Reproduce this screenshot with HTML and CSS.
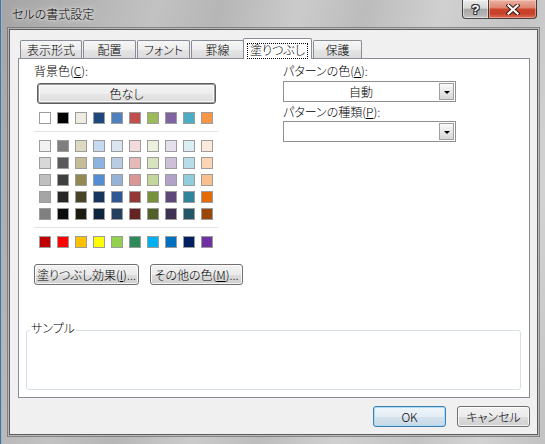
FILE: index.html
```html
<!DOCTYPE html>
<html lang="ja">
<head>
<meta charset="utf-8">
<title>セルの書式設定</title>
<link rel="stylesheet" href="styles.css">
</head>
<body>
<div class="window">
  <div class="titlebar">
    <div class="title">セルの書式設定</div>
    <div class="caption-buttons">
      <div class="cap-btn help"><span class="help-glyph">?</span></div>
      <div class="cap-btn close">
        <svg width="14" height="11" viewBox="0 0 14 11">
          <path d="M2.5 1.5 L11.5 9.5 M11.5 1.5 L2.5 9.5" stroke="#3a1a14" stroke-width="4.2" stroke-linecap="square" fill="none"/>
          <path d="M2.5 1.5 L11.5 9.5 M11.5 1.5 L2.5 9.5" stroke="#ffffff" stroke-width="2.2" stroke-linecap="square" fill="none"/>
        </svg>
      </div>
    </div>
  </div>
  <div class="client">
    <div class="tabs">
      <div class="tab w62">表示形式</div>
      <div class="tab w53">配置</div>
      <div class="tab w53">フォント</div>
      <div class="tab w53">罫線</div>
      <div class="tab sel"><span class="focus">塗りつぶし</span></div>
      <div class="tab w49">保護</div>
    </div>
    <div class="page">
      <div class="top">
        <div class="left">
          <div class="label">背景色(<u>C</u>):</div>
          <div class="nocolor">色なし</div>
          <div class="swatches first">
            <span class="sw" style="background:#ffffff"></span>
            <span class="sw" style="background:#000000"></span>
            <span class="sw" style="background:#eeece1"></span>
            <span class="sw" style="background:#1f497d"></span>
            <span class="sw" style="background:#4f81bd"></span>
            <span class="sw" style="background:#c0504d"></span>
            <span class="sw" style="background:#9bbb59"></span>
            <span class="sw" style="background:#8064a2"></span>
            <span class="sw" style="background:#4bacc6"></span>
            <span class="sw" style="background:#f79646"></span>
          </div>
          <div class="sep"></div>
          <div class="tints">
            <div class="swatches">
              <span class="sw" style="background:#f2f2f2"></span>
              <span class="sw" style="background:#7f7f7f"></span>
              <span class="sw" style="background:#ddd9c3"></span>
              <span class="sw" style="background:#c6d9f0"></span>
              <span class="sw" style="background:#dbe5f1"></span>
              <span class="sw" style="background:#f2dcdb"></span>
              <span class="sw" style="background:#ebf1dd"></span>
              <span class="sw" style="background:#e5e0ec"></span>
              <span class="sw" style="background:#dbeef3"></span>
              <span class="sw" style="background:#fdeada"></span>
            </div>
            <div class="swatches">
              <span class="sw" style="background:#d8d8d8"></span>
              <span class="sw" style="background:#595959"></span>
              <span class="sw" style="background:#c4bd97"></span>
              <span class="sw" style="background:#8db3e2"></span>
              <span class="sw" style="background:#b8cce4"></span>
              <span class="sw" style="background:#e5b9b7"></span>
              <span class="sw" style="background:#d7e3bc"></span>
              <span class="sw" style="background:#ccc1d9"></span>
              <span class="sw" style="background:#b7dde8"></span>
              <span class="sw" style="background:#fbd5b5"></span>
            </div>
            <div class="swatches">
              <span class="sw" style="background:#bfbfbf"></span>
              <span class="sw" style="background:#3f3f3f"></span>
              <span class="sw" style="background:#938953"></span>
              <span class="sw" style="background:#548dd4"></span>
              <span class="sw" style="background:#95b3d7"></span>
              <span class="sw" style="background:#d99694"></span>
              <span class="sw" style="background:#c3d69b"></span>
              <span class="sw" style="background:#b2a2c7"></span>
              <span class="sw" style="background:#92cddc"></span>
              <span class="sw" style="background:#fac08f"></span>
            </div>
            <div class="swatches">
              <span class="sw" style="background:#a5a5a5"></span>
              <span class="sw" style="background:#262626"></span>
              <span class="sw" style="background:#494429"></span>
              <span class="sw" style="background:#17365d"></span>
              <span class="sw" style="background:#2f5794"></span>
              <span class="sw" style="background:#953734"></span>
              <span class="sw" style="background:#76923c"></span>
              <span class="sw" style="background:#5f497a"></span>
              <span class="sw" style="background:#31859b"></span>
              <span class="sw" style="background:#e36c09"></span>
            </div>
            <div class="swatches">
              <span class="sw" style="background:#7f7f7f"></span>
              <span class="sw" style="background:#0c0c0c"></span>
              <span class="sw" style="background:#1d1b10"></span>
              <span class="sw" style="background:#0f243e"></span>
              <span class="sw" style="background:#244061"></span>
              <span class="sw" style="background:#632423"></span>
              <span class="sw" style="background:#4f6128"></span>
              <span class="sw" style="background:#3f3151"></span>
              <span class="sw" style="background:#205867"></span>
              <span class="sw" style="background:#974806"></span>
            </div>
          </div>
          <div class="sep"></div>
          <div class="swatches standard">
            <span class="sw" style="background:#c00000"></span>
            <span class="sw" style="background:#ff0000"></span>
            <span class="sw" style="background:#ffc000"></span>
            <span class="sw" style="background:#ffff00"></span>
            <span class="sw" style="background:#92d050"></span>
            <span class="sw" style="background:#2e8b57"></span>
            <span class="sw" style="background:#00b0f0"></span>
            <span class="sw" style="background:#0070c0"></span>
            <span class="sw" style="background:#002060"></span>
            <span class="sw" style="background:#7030a0"></span>
          </div>
          <div class="btnrow">
            <div class="btn effects">塗りつぶし効果(<u>I</u>)...</div>
            <div class="btn more">その他の色(<u>M</u>)...</div>
          </div>
        </div>
        <div class="right">
          <div class="label">パターンの色(<u>A</u>):</div>
          <div class="combo"><span class="combo-text">自動</span><span class="drop"><span class="arrow"></span></span></div>
          <div class="label second">パターンの種類(<u>P</u>):</div>
          <div class="combo combo2"><span class="combo-text"></span><span class="drop"><span class="arrow"></span></span></div>
        </div>
      </div>
      <div class="sample">
        <span class="sample-label">サンプル</span>
      </div>
    </div>
    <div class="footer">
      <div class="btn dlg default">OK</div>
      <div class="btn dlg">キャンセル</div>
    </div>
  </div>
</div>
</body>
</html>
```

FILE: styles.css
```css
* { box-sizing: border-box; }

html, body {
  margin: 0;
  padding: 0;
}

body {
  width: 545px;
  height: 444px;
  overflow: hidden;
  font-family: "Noto Sans CJK JP", "Noto Sans", sans-serif;
  font-size: 12px;
  font-weight: 300;
  font-feature-settings: "palt" 1;
  color: #000;
  background: #c0c0c0;
}

u {
  text-decoration: underline;
  text-underline-offset: 1px;
}

.window {
  width: 545px;
  height: 444px;
  display: flex;
  flex-direction: column;
  background:
    linear-gradient(104deg,
      #a4a4a4 0%, #b3b3b3 12%, #c2c2c2 24%, #b6b6b6 34%,
      #cbcbcb 46%, #bcbcbc 56%, #d0d0d0 68%, #c4c4c4 80%,
      #d2d2d2 90%, #c2c2c2 100%);
  box-shadow: inset 1px 0 0 #4d6f9c, inset 2px 0 0 #9fb4cf;
}

.titlebar {
  height: 29px;
  flex: none;
  display: flex;
  justify-content: space-between;
  align-items: flex-start;
  padding: 0 8px 0 12px;
}

.title {
  margin-top: 6px;
  line-height: 16px;
  color: #000;
  text-shadow: 0 0 6px rgba(255,255,255,0.95), 0 0 3px rgba(255,255,255,0.8);
}

.caption-buttons {
  display: flex;
}

.cap-btn {
  height: 19px;
  display: flex;
  align-items: center;
  justify-content: center;
  border: 1px solid rgba(45,45,45,0.85);
  border-top: none;
}

.help {
  width: 26px;
  border-right: none;
  border-radius: 0 0 0 4px;
  background: linear-gradient(#ececec 0%, #d6d6d6 45%, #a8a8a8 52%, #b4b4b4 80%, #c6c6c6 100%);
  box-shadow: inset 0 0 0 1px rgba(255,255,255,0.45);
}

.help-glyph {
  font-family: "Liberation Sans", "DejaVu Sans", sans-serif;
  font-weight: bold;
  font-size: 13px;
  line-height: 13px;
  color: #fff;
  text-shadow: 1px 0 0 #333, -1px 0 0 #333, 0 1px 0 #333, 0 -1px 0 #333,
    1px 1px 0 #333, -1px -1px 0 #333, 1px -1px 0 #333, -1px 1px 0 #333;
}

.close {
  width: 49px;
  border-radius: 0 0 4px 0;
  background: linear-gradient(#eab1a4 0%, #de8873 42%, #c9452c 52%, #c7402a 75%, #dc6a4f 100%);
  box-shadow: inset 0 0 0 1px rgba(255,220,210,0.45);
}

.close svg { display: block; }

.client {
  flex: 1;
  margin: 0 7px 9px 9px;
  background: #f0f0f0;
  border: 1px solid #5c5c5c;
  box-shadow: 0 0 0 1px rgba(255,255,255,0.45), 0 0 0 2px rgba(90,90,90,0.6);
  padding: 8px 7px 7px 8px;
  display: flex;
  flex-direction: column;
}

.tabs {
  height: 20px;
  display: flex;
  align-items: flex-end;
  padding-left: 2px;
}

.tab {
  height: 18px;
  margin-right: 1px;
  border: 1px solid #898c95;
  border-bottom: none;
  border-radius: 2px 2px 0 0;
  background: linear-gradient(#f6f6f6 0%, #ededed 50%, #e4e4e4 51%, #dcdcdc 100%);
  text-align: center;
  line-height: 17px;
  white-space: nowrap;
}

.w62 { width: 62px; }
.w53 { width: 53px; }
.w49 { width: 49px; }

.tab.sel {
  position: relative;
  z-index: 1;
  width: 69px;
  height: 21px;
  margin-left: -2px;
  margin-bottom: -1px;
  background: #fff;
  padding-top: 4px;
  line-height: 13px;
}

.focus {
  display: inline-block;
  padding: 0 2px;
  height: 14px;
  line-height: 12px;
  outline: 1px dotted #000;
  outline-offset: 0;
}

.page {
  height: 340px;
  border: 1px solid #898c95;
  background: #fff;
}

.top {
  display: flex;
  padding: 5px 0 0 15px;
}

.left {
  width: 249px;
}

.right {
  width: 173px;
}

.label {
  height: 14px;
  line-height: 14px;
  white-space: nowrap;
}

.label.second {
  margin-top: 3px;
}

.nocolor {
  margin: 5px 0 0 3px;
  width: 179px;
  height: 21px;
  border: 1px solid #5e5e5e;
  border-radius: 3px;
  box-shadow: inset 0 0 0 1px #9a9a9a, inset 0 0 0 2px #fafafa;
  background: linear-gradient(#f4f4f4 0%, #eeeeee 50%, #e6e6e6 51%, #dedede 100%);
  text-align: center;
  line-height: 19px;
}

.swatches {
  display: flex;
  gap: 6px;
  margin-left: 5px;
}

.swatches.first,
.swatches.standard {
  margin-top: 8px;
}

.sw {
  width: 12px;
  height: 12px;
  border: 1px solid #9c9c9c;
  flex: none;
}

.sep {
  margin-top: 7px;
  width: 184px;
  height: 1px;
  background: #e2e2e2;
}

.tints {
  margin-top: 8px;
  display: flex;
  flex-direction: column;
  gap: 5px;
}

.btnrow {
  margin-top: 16px;
  display: flex;
  gap: 11px;
}

.btn {
  height: 21px;
  border: 1px solid #707070;
  border-radius: 3px;
  background: linear-gradient(#f2f2f2 0%, #ebebeb 50%, #dddddd 51%, #cfcfcf 100%);
  box-shadow: inset 0 0 0 1px rgba(255,255,255,0.75);
  text-align: center;
  line-height: 19px;
  white-space: nowrap;
}

.effects { width: 105px; }
.more { width: 93px; }

.combo {
  margin-top: 3px;
  height: 21px;
  border: 1px solid #8f9094;
  background: #fff;
  display: flex;
}

.combo2 {
  margin-top: 2px;
}

.combo-text {
  flex: 1;
  text-align: center;
  line-height: 19px;
}

.drop {
  width: 15px;
  height: 17px;
  margin: 1px;
  border: 1px solid #a0a0a0;
  background: linear-gradient(#fbfbfb 0%, #e8e8e8 50%, #d6d6d6 100%);
  display: flex;
  align-items: center;
  justify-content: center;
}

.arrow {
  width: 0;
  height: 0;
  border-left: 3px solid transparent;
  border-right: 3px solid transparent;
  border-top: 3px solid #000;
  margin-top: 1px;
}

.sample {
  position: relative;
  margin: 45px 0 0 7px;
  width: 495px;
  height: 60px;
  border: 1px solid #d5dfe5;
  border-radius: 3px;
}

.sample-label {
  position: absolute;
  top: -10px;
  left: 3px;
  padding: 0 1px;
  background: #fff;
  line-height: 14px;
}

.footer {
  margin-top: 8px;
  display: flex;
  justify-content: flex-end;
  gap: 11px;
}

.dlg {
  width: 73px;
}

.btn.default {
  border-color: #3c7fb1;
  background: linear-gradient(#eef5fa 0%, #e5eef5 50%, #d4e2ed 51%, #c8d9e6 100%);
  box-shadow: inset 0 0 0 1px #a9dcf6;
}
```
